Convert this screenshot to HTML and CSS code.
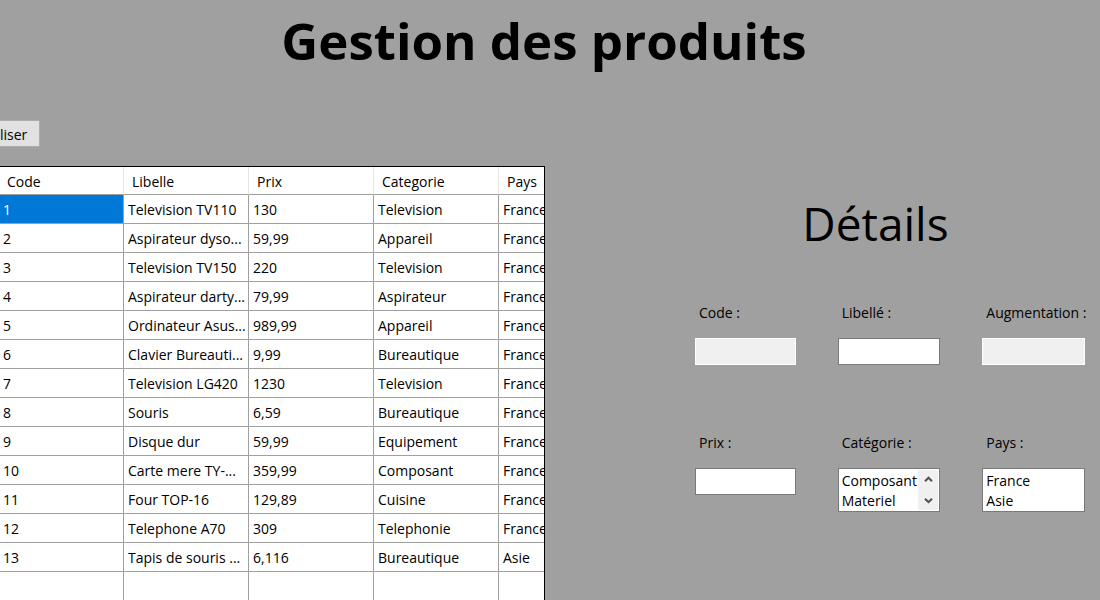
FILE: index.html
```html
<!DOCTYPE html>
<html lang="fr">
<head>
<meta charset="utf-8">
<title>Gestion des produits</title>
<link rel="stylesheet" href="styles.css">
</head>
<body>
<header class="page-header"><h1 class="title">Gestion des produits</h1></header>
<main class="content">
  <section class="products">
    <div class="toolbar"><button class="refresh" type="button">liser</button></div>
    <div class="grid-frame">
      <table class="grid">
        <colgroup><col class="col-code"><col class="col"><col class="col"><col class="col"><col class="col"></colgroup>
        <thead>
          <tr><th>Code</th><th>Libelle</th><th>Prix</th><th>Categorie</th><th>Pays</th></tr>
        </thead>
        <tbody>
          <tr><td class="selected">1</td><td>Television TV110</td><td>130</td><td>Television</td><td>France</td></tr>
          <tr><td>2</td><td>Aspirateur dyso...</td><td>59,99</td><td>Appareil</td><td>France</td></tr>
          <tr><td>3</td><td>Television TV150</td><td>220</td><td>Television</td><td>France</td></tr>
          <tr><td>4</td><td>Aspirateur darty...</td><td>79,99</td><td>Aspirateur</td><td>France</td></tr>
          <tr><td>5</td><td>Ordinateur Asus...</td><td>989,99</td><td>Appareil</td><td>France</td></tr>
          <tr><td>6</td><td>Clavier Bureauti...</td><td>9,99</td><td>Bureautique</td><td>France</td></tr>
          <tr><td>7</td><td>Television LG420</td><td>1230</td><td>Television</td><td>France</td></tr>
          <tr><td>8</td><td>Souris</td><td>6,59</td><td>Bureautique</td><td>France</td></tr>
          <tr><td>9</td><td>Disque dur</td><td>59,99</td><td>Equipement</td><td>France</td></tr>
          <tr><td>10</td><td>Carte mere TY-...</td><td>359,99</td><td>Composant</td><td>France</td></tr>
          <tr><td>11</td><td>Four TOP-16</td><td>129,89</td><td>Cuisine</td><td>France</td></tr>
          <tr><td>12</td><td>Telephone A70</td><td>309</td><td>Telephonie</td><td>France</td></tr>
          <tr><td>13</td><td>Tapis de souris ...</td><td>6,116</td><td>Bureautique</td><td>Asie</td></tr>
          <tr class="blank"><td></td><td></td><td></td><td></td><td></td></tr>
        </tbody>
      </table>
    </div>
  </section>
  <section class="details">
    <h2 class="subtitle">Détails</h2>
    <form class="fields">
      <div class="field"><label for="code">Code :</label><input class="box" id="code" type="text" disabled></div>
      <div class="field"><label for="libelle">Libellé :</label><input class="box" id="libelle" type="text"></div>
      <div class="field"><label for="augmentation">Augmentation :</label><input class="box" id="augmentation" type="text" disabled></div>
      <div class="field"><label for="prix">Prix :</label><input class="box" id="prix" type="text"></div>
      <div class="field"><label for="categorie">Catégorie :</label>
        <div class="list-wrap">
          <select class="list" id="categorie" size="2"><option>Composant</option><option>Materiel</option></select>
          <span class="scroll" aria-hidden="true">
            <svg class="arrow" viewBox="0 0 9 7"><path d="M1 5.2 4.5 1.7 8 5.2"/></svg>
            <svg class="arrow" viewBox="0 0 9 7"><path d="M1 1.7 4.5 5.2 8 1.7"/></svg>
          </span>
        </div>
      </div>
      <div class="field"><label for="pays">Pays :</label><select class="list" id="pays" size="2"><option>France</option><option>Asie</option></select></div>
    </form>
  </section>
</main>
</body>
</html>
```
FILE: styles.css
```css
* { box-sizing: border-box; }
body {
  margin: 0;
  background: #a0a0a0;
  color: #000;
  font: 14px/20px "Open Sans", "Noto Sans", sans-serif;
  overflow: hidden;
}
.page-header { padding: 4px 12px 0 0; text-align: center; }
.title { margin: 0; font-size: 51px; line-height: 72px; font-weight: 700; }
.content { display: grid; grid-template-columns: minmax(0, 545fr) minmax(0, 555fr); }
.toolbar { padding: 44px 0 19px; display: flex; }
.refresh {
  height: 27px;
  padding: 2px 12px 0 0;
  border: 1px solid #adadad;
  border-left: 0;
  background: #e1e1e1;
  color: #000;
  font: inherit;
}
.grid-frame {
  overflow: hidden;
  background: #fff;
  border: 1px solid #000;
  border-width: 1px 1px 0 0;
}
.grid { width: 624px; table-layout: fixed; border-collapse: separate; border-spacing: 0; }
.col-code { width: 124px; }
.col { width: 125px; }
.grid th, .grid td {
  height: 29px;
  padding: 2px 0 0 4px;
  border-right: 1px solid #a0a0a0;
  border-bottom: 1px solid #a0a0a0;
  text-align: left;
  font-weight: 400;
  white-space: nowrap;
}
.grid th { height: 28px; padding-left: 8px; border-right-color: #e5e5e5; }
.grid td:first-child { padding-left: 3px; }
.grid th:first-child { padding-left: 7px; }
.grid .selected { background: #0078d7; color: #fff; }
.grid .blank td { border-bottom: 0; }
.details { padding: 111px 15px 0 150px; }
.subtitle {
  margin: 0 29px 0 0;
  font-size: 46px;
  line-height: 72px;
  font-weight: 400;
  text-align: center;
}
.fields {
  display: grid;
  grid-template-columns: minmax(0, 101fr) minmax(0, 103fr) minmax(0, 103fr);
  gap: 68px 42px;
  padding-top: 44px;
}
.field { display: flex; flex-direction: column; gap: 15px; }
.field label { padding-left: 4px; white-space: nowrap; }
.box {
  width: 100%;
  height: 27px;
  border: 1px solid #7a7a7a;
  border-radius: 0;
  background: #fff;
  font: inherit;
}
.box:disabled { background: #f0f0f0; border-color: #fff; }
.list-wrap { position: relative; }
.list {
  display: block;
  width: 100%;
  height: 44px;
  padding: 2px 0 0;
  border: 1px solid #7a7a7a;
  border-radius: 0;
  background: #fff;
  color: #000;
  font: inherit;
  overflow: hidden;
}
.list option { min-height: 20px; padding: 0 3px; line-height: 20px; }
.scroll {
  position: absolute;
  top: 2px;
  right: 2px;
  bottom: 2px;
  width: 20px;
  padding: 6px 0;
  background: #f0f0f0;
  display: flex;
  flex-direction: column;
  align-items: center;
  justify-content: space-between;
}
.arrow { width: 9px; height: 7px; fill: none; stroke: #505050; stroke-width: 2; }
```
